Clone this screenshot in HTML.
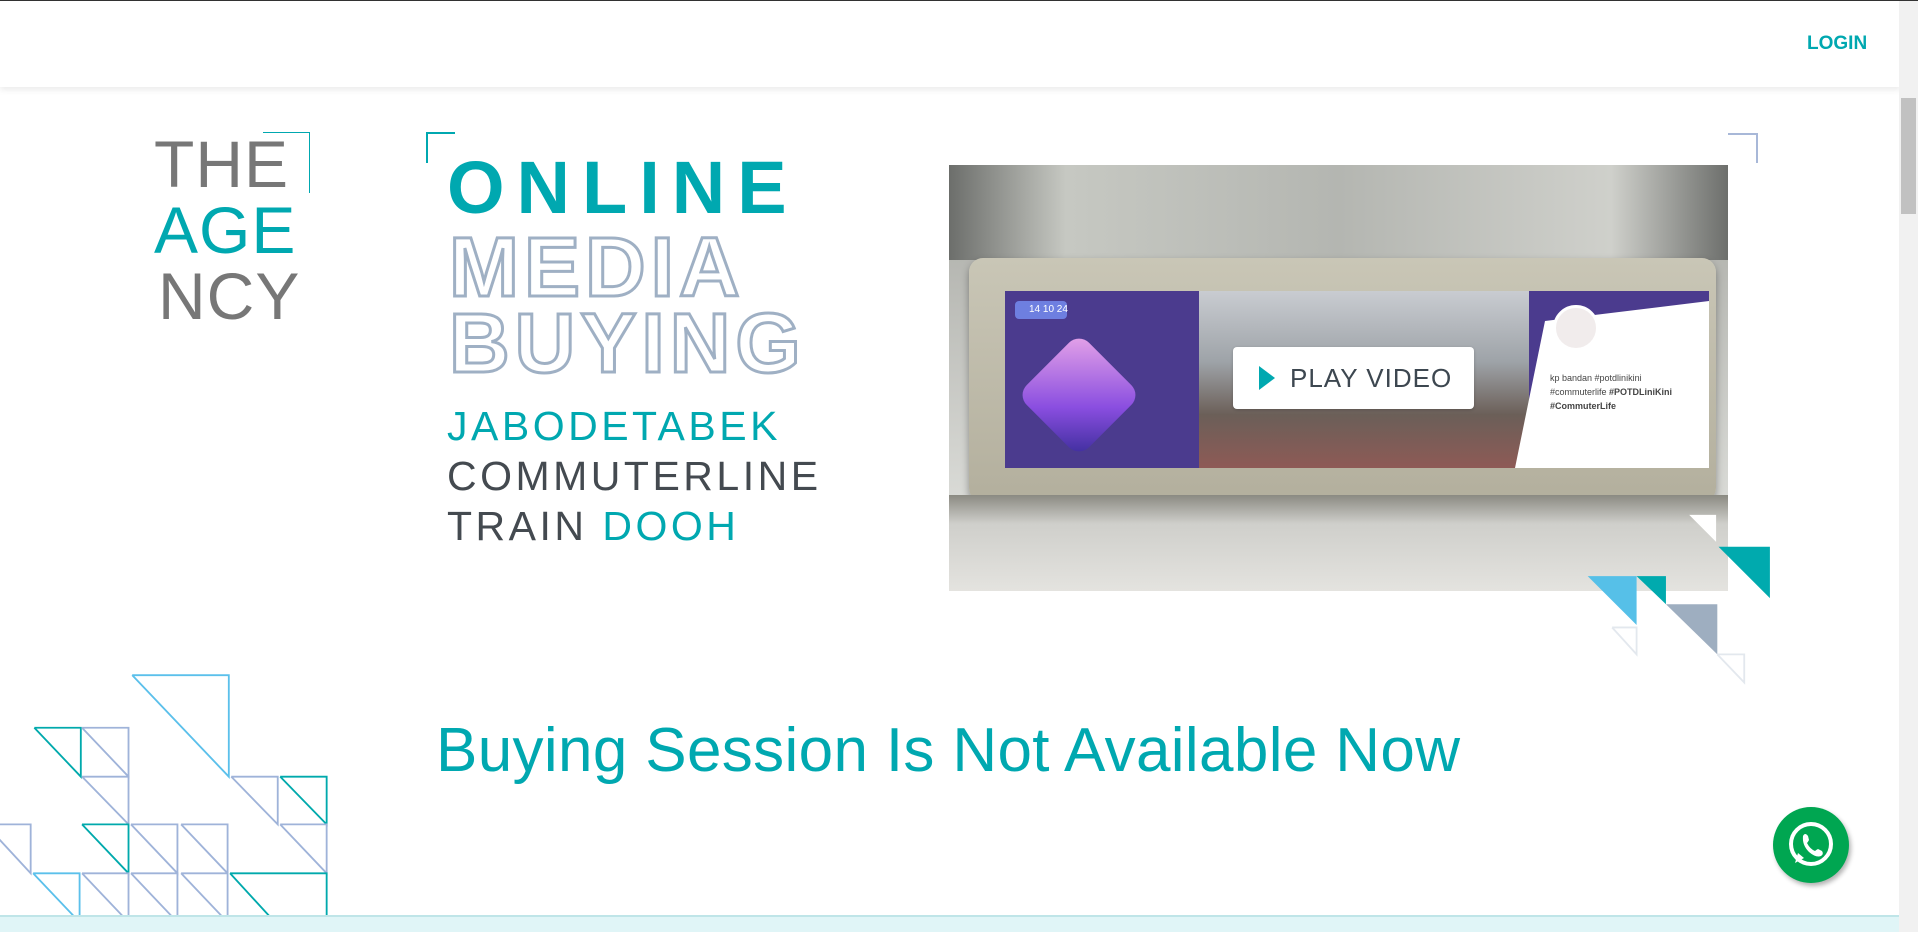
<!DOCTYPE html>
<html><head><meta charset="utf-8"><style>
*{margin:0;padding:0;box-sizing:border-box}
html,body{width:1918px;height:932px;overflow:hidden;background:#fff;font-family:"Liberation Sans",sans-serif}
.abs{position:absolute}
</style></head><body>
<div class="abs" style="left:0;top:0;width:1918px;height:1px;background:#333"></div>
<div class="abs" style="left:0;top:1px;width:1901px;height:86px;background:#fff;box-shadow:0 3px 6px rgba(0,0,0,.08)"></div>
<div class="abs" style="left:1807px;top:33px;font-size:19px;font-weight:bold;color:#00a8b0">LOGIN</div>

<div class="abs" style="left:1899px;top:1px;width:19px;height:931px;background:#f1f1f1"></div>
<div class="abs" style="left:1901px;top:98px;width:15px;height:116px;background:#c1c1c1"></div>

<div class="abs" style="left:263px;top:132px;width:46px;height:1px;background:#00a8b0"></div>
<div class="abs" style="left:309px;top:132px;width:1px;height:61px;background:#00a8b0"></div>
<div class="abs" style="left:154px;top:131px;font-size:66px;line-height:66px;letter-spacing:1px;color:#777">THE<br><span style="color:#00a8b0">AGE</span><br><span style="margin-left:4px">NCY</span></div>

<div class="abs" style="left:426px;top:132px;width:29px;height:2px;background:#00a8b0"></div>
<div class="abs" style="left:426px;top:132px;width:2px;height:31px;background:#00a8b0"></div>
<div class="abs" style="left:447px;top:150px;font-size:74px;font-weight:900;letter-spacing:12px;color:#00a8b0;line-height:76px">ONLINE</div>
<div class="abs" style="left:449px;top:229px;font-size:84px;font-weight:bold;letter-spacing:5px;color:transparent;-webkit-text-stroke:3px #9fb0c4;line-height:76px">MEDIA<br>BUYING</div>
<div class="abs" style="left:447px;top:401px;font-size:41px;letter-spacing:3.5px;line-height:50px;color:#444a50"><span style="color:#00a8b0">JABODETABEK</span><br>COMMUTERLINE<br>TRAIN <span style="color:#00a8b0">DOOH</span></div>

<div class="abs" style="left:949px;top:165px;width:779px;height:426px;overflow:hidden;background:linear-gradient(180deg,#8d8f8c 0%,#c9cac4 10%,#b6b7b2 22%,#d9dad6 78%,#e9e9e7 100%)">
  <div class="abs" style="left:0;top:0;width:779px;height:95px;background:linear-gradient(90deg,#6c6e6b 0%,#c6c8c2 15%,#b4b6b1 50%,#cfd0cb 85%,#6d6f6c 100%)"></div>
  <div class="abs" style="left:20px;top:93px;width:747px;height:244px;border-radius:14px;background:linear-gradient(180deg,#c9c6b6,#b3af9d);box-shadow:0 4px 8px rgba(0,0,0,.35)"></div>
  <div class="abs" style="left:0;top:330px;width:779px;height:96px;background:linear-gradient(180deg,#8b8a82 0%,#cfcfcb 30%,#e4e3df 100%)"></div>
  <div class="abs" style="left:56px;top:126px;width:704px;height:177px;background:#4b3b8e;overflow:hidden">
    <div class="abs" style="left:194px;top:0;width:330px;height:177px;background:linear-gradient(180deg,#c9ccd1 0%,#9ea3a8 40%,#6b5f58 70%,#8e5a56 100%)"></div>
    <div class="abs" style="left:510px;top:0;width:194px;height:177px;background:#fff;clip-path:polygon(30px 30px,194px 10px,194px 177px,0 177px)"></div>
    <div class="abs" style="left:30px;top:60px;width:88px;height:88px;transform:rotate(45deg);border-radius:14px;background:linear-gradient(135deg,#e8a6e8,#8a4ee0 60%,#3b2d9a)"></div>
    <div class="abs" style="left:10px;top:10px;width:52px;height:18px;border-radius:4px;background:#6e7fe0;font-size:10px;color:#fff;padding:3px 0 0 14px;white-space:nowrap">14 10 24</div>
    <div class="abs" style="left:548px;top:14px;width:46px;height:46px;border-radius:50%;background:#f1ecec;border:3px solid #fff"></div>
    <div class="abs" style="left:545px;top:80px;font-size:9px;line-height:14px;color:#444">kp bandan #potdlinikini<br>#commuterlife <b>#POTDLiniKini</b><br><b>#CommuterLife</b></div>
  </div>
  <div class="abs" style="left:284px;top:182px;width:241px;height:62px;background:#fff;border-radius:4px;box-shadow:0 1px 3px rgba(0,0,0,.2)">
    <div class="abs" style="left:26px;top:19px;width:0;height:0;border-top:12px solid transparent;border-bottom:12px solid transparent;border-left:16px solid #00a8b0"></div>
    <div class="abs" style="left:57px;top:16px;font-size:26px;color:#3d4750;letter-spacing:1px">PLAY VIDEO</div>
  </div>
</div>
<div class="abs" style="left:1728px;top:133px;width:30px;height:2px;background:#a8b8d8"></div>
<div class="abs" style="left:1756px;top:133px;width:2px;height:30px;background:#a8b8d8"></div>

<svg class="abs" style="left:0;top:0" width="1918" height="932" viewBox="0 0 1568 762">
  <g>
    <polygon points="1381,421 1403,421 1403,443" fill="#fff"/>
    <polygon points="1405,447 1447,447 1447,489" fill="#00aaae"/>
    <polygon points="1298,471 1338,471 1338,511" fill="#56c0e8"/>
    <polygon points="1338,471 1362,471 1362,494" fill="#00aaae"/>
    <polygon points="1362,494 1404,494 1404,535" fill="#9eaec0"/>
    <polyline points="1318,513 1338,513 1338,535 1318,513" fill="none" stroke="#e3e8ee" stroke-width="1.5"/>
    <polyline points="1404,535 1426,535 1426,558 1404,535" fill="none" stroke="#e3e8ee" stroke-width="1.5"/>
  </g>
  <g fill="none" stroke-width="1.5">
    <polyline points="108,552 187,552 187,635 108,552" stroke="#5bc0eb"/>
    <polyline points="28,595 66,595 66,635 28,595" stroke="#00a9ac"/>
    <polyline points="67,595 105,595 105,635 67,595" stroke="#9fb3d9"/>
    <polyline points="67,635 105,635 105,674 67,635" stroke="#9fb3d9"/>
    <polyline points="189,635 227,635 227,674 189,635" stroke="#9fb3d9"/>
    <polyline points="229,635 267,635 267,674 229,635" stroke="#00a9ac"/>
    <polyline points="-12,674 25,674 25,714 -12,674" stroke="#9fb3d9"/>
    <polyline points="67,674 105,674 105,714 67,674" stroke="#00a9ac"/>
    <polyline points="107,674 145,674 145,714 107,674" stroke="#9fb3d9"/>
    <polyline points="148,674 186,674 186,714 148,674" stroke="#9fb3d9"/>
    <polyline points="229,674 267,674 267,714 229,674" stroke="#9fb3d9"/>
    <polyline points="27,714 65,714 65,754 27,714" stroke="#5bc0eb"/>
    <polyline points="67,714 105,714 105,754 67,714" stroke="#9fb3d9"/>
    <polyline points="107,714 145,714 145,754 107,714" stroke="#9fb3d9"/>
    <polyline points="148,714 186,714 186,754 148,714" stroke="#9fb3d9"/>
    <polyline points="188,714 267,714 267,800 188,714" stroke="#00a9ac"/>
  </g>
</svg>

<div class="abs" style="left:436px;top:715px;font-size:62px;letter-spacing:0.35px;color:#00a8b0;white-space:nowrap">Buying Session Is Not Available Now</div>

<div class="abs" style="left:1773px;top:807px;width:76px;height:76px;border-radius:50%;background:#00a651;box-shadow:2px 3px 5px rgba(0,0,0,.3)">
  <svg width="76" height="76" viewBox="0 0 76 76"><circle cx="38" cy="37" r="20" fill="none" stroke="#fff" stroke-width="4"/><path d="M22 56 L25 46 L31 51 Z" fill="#fff"/><path d="M30 29 q2-4 5 0 l1 4 q-1 2-2 3 q3 6 8 8 q1-1 3-2 l4 2 q2 3-1 5 q-5 2-12-4 q-7-7-6-16z" fill="#fff"/></svg>
</div>

<div class="abs" style="left:0;top:915px;width:1899px;height:17px;background:#e0f5f7;border-top:2px solid #bfe5e8"></div>
</body></html>
